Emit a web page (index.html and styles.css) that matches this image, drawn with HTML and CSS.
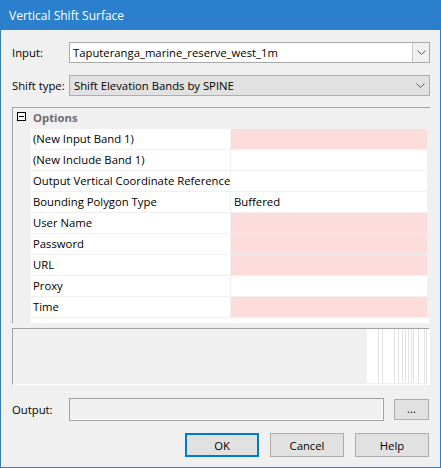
FILE: index.html
```html
<!DOCTYPE html>
<html>
<head>
<meta charset="utf-8">
<link rel="stylesheet" href="styles.css">
</head>
<body>
<div class="window">
  <div class="titlebar">Vertical Shift Surface</div>
  <div class="content">
    <div class="field-row first">
      <div class="label">Input:</div>
      <div class="combo editable">
        <div class="combo-text">Taputeranga_marine_reserve_west_1m</div>
        <div class="combo-btn"><svg width="9" height="5" viewBox="0 0 9 5"><path d="M0.5 0.5 L4.5 4.5 L8.5 0.5" fill="none" stroke="#606060" stroke-width="1"/></svg></div>
      </div>
    </div>
    <div class="field-row second">
      <div class="label">Shift type:</div>
      <div class="combo list">
        <div class="combo-text">Shift Elevation Bands by SPINE</div>
        <div class="combo-arrow"><svg width="9" height="5" viewBox="0 0 9 5"><path d="M0.5 0.5 L4.5 4.5 L8.5 0.5" fill="none" stroke="#606060" stroke-width="1"/></svg></div>
      </div>
    </div>
    <div class="grid">
      <div class="cat-row">
        <div class="gutter"><span class="minus"></span></div>
        <div class="cat-name">Options</div>
      </div>
      <div class="prop-row"><div class="gutter"></div><div class="name">(New Input Band 1)</div><div class="value req"></div></div>
      <div class="prop-row"><div class="gutter"></div><div class="name">(New Include Band 1)</div><div class="value"></div></div>
      <div class="prop-row"><div class="gutter"></div><div class="name">Output Vertical Coordinate Reference</div><div class="value"></div></div>
      <div class="prop-row"><div class="gutter"></div><div class="name">Bounding Polygon Type</div><div class="value">Buffered</div></div>
      <div class="prop-row"><div class="gutter"></div><div class="name">User Name</div><div class="value req"></div></div>
      <div class="prop-row"><div class="gutter"></div><div class="name">Password</div><div class="value req"></div></div>
      <div class="prop-row"><div class="gutter"></div><div class="name">URL</div><div class="value req"></div></div>
      <div class="prop-row"><div class="gutter"></div><div class="name">Proxy</div><div class="value"></div></div>
      <div class="prop-row"><div class="gutter"></div><div class="name">Time</div><div class="value req"></div></div>
      <div class="grid-tail"><div class="gutter"></div><div class="tail-fill"></div></div>
    </div>
    <div class="desc">
      <div class="glitch">
        <div class="g" style="width:11px"></div>
        <div class="g" style="width:4px"></div>
        <div class="g" style="width:12px"></div>
        <div class="g" style="width:4px"></div>
        <div class="g" style="width:4px"></div>
        <div class="g" style="width:3px"></div>
        <div class="g" style="width:3px"></div>
        <div class="g" style="width:3px"></div>
        <div class="g" style="width:2px"></div>
        <div class="g" style="width:5px"></div>
        <div class="g" style="width:6px"></div>
        <div class="g" style="width:2px"></div>
        <div class="g" style="width:2px"></div>
      </div>
    </div>
    <div class="output-row">
      <div class="label">Output:</div>
      <div class="out-box"></div>
      <div class="btn small">...</div>
    </div>
    <div class="buttons">
      <div class="btn default">OK</div>
      <div class="btn">Cancel</div>
      <div class="btn">Help</div>
    </div>
  </div>
</div>
</body>
</html>
```
FILE: styles.css
```css
html, body {
  margin: 0;
  padding: 0;
  background: #f0f0f0;
}
body {
  font-family: "Open Sans", "Noto Sans", sans-serif;
  font-size: 11.3px;
  color: #000;
}
.window {
  width: 441px;
  height: 468px;
  box-sizing: border-box;
  border: 1px solid #2b7fcc;
  border-top: 0;
  background: #f0f0f0;
  display: flex;
  flex-direction: column;
}
.titlebar {
  height: 30px;
  margin: 0 -1px;
  background: #2b7fcc;
  color: #fff;
  font-size: 12px;
  padding-left: 9px;
  display: flex;
  align-items: center;
}
.content {
  padding: 0 10px 0 11px;
  display: flex;
  flex-direction: column;
}
.field-row {
  display: flex;
  align-items: center;
  height: 21px;
}
.field-row.first { margin-top: 12px; }
.field-row.second { margin-top: 12px; }
.label {
  width: 57px;
  flex: none;
}
.combo {
  flex: 1;
  height: 21px;
  box-sizing: border-box;
  display: flex;
  align-items: center;
}
.combo.editable {
  border: 1px solid #a9a9a9;
  background: #fff;
}
.combo.list {
  border: 1px solid #adadad;
  background: #e1e1e1;
}
.combo-text {
  flex: 1;
  padding-left: 3px;
  white-space: nowrap;
  overflow: hidden;
}
.combo.list .combo-text { padding-left: 4px; }
.combo-btn {
  width: 16px;
  height: 19px;
  border-left: 1px solid #c8c8c8;
  background: #f0f0f0;
  display: flex;
  align-items: center;
  justify-content: center;
}
.combo-arrow {
  width: 17px;
  display: flex;
  align-items: center;
  justify-content: center;
}
.grid {
  margin-top: 11px;
  height: 216px;
  box-sizing: border-box;
  border-top: 1px solid #a0a0a0;
  border-left: 1px solid #a0a0a0;
  display: flex;
  flex-direction: column;
}
.cat-row, .prop-row {
  display: flex;
  height: 21px;
  flex: none;
}
.gutter {
  width: 18px;
  flex: none;
  background: #f0f0f0;
  position: relative;
}
.cat-name {
  flex: 1;
  background: #f0f0f0;
  font-weight: bold;
  color: #6d6d6d;
  padding-left: 2px;
  line-height: 20px;
}
.minus {
  position: absolute;
  left: 4px;
  top: 4px;
  width: 9px;
  height: 9px;
  box-sizing: border-box;
  border: 1px solid #000;
  background: #fff;
}
.minus::after {
  content: "";
  position: absolute;
  left: 1px;
  right: 1px;
  top: 3px;
  height: 1px;
  background: #000;
}
.name {
  width: 200px;
  flex: none;
  background: #fff;
  border-bottom: 1px solid #f0f0f0;
  border-right: 1px solid #f0f0f0;
  box-sizing: border-box;
  padding-left: 2px;
  line-height: 20px;
  white-space: nowrap;
  overflow: hidden;
}
.value {
  width: 196px;
  flex: none;
  background: #fff;
  border-bottom: 1px solid #f0f0f0;
  box-sizing: border-box;
  padding-left: 3px;
  line-height: 20px;
  white-space: nowrap;
}
.value.req { background: #fddcdc; }
.grid-tail {
  flex: 1;
  display: flex;
}
.tail-fill {
  width: 398px;
  background: #fff;
}
.desc {
  margin-top: 5px;
  height: 57px;
  box-sizing: border-box;
  border-top: 1px solid #a0a0a0;
  border-left: 1px solid #a0a0a0;
  border-right: 1px solid #fff;
  border-bottom: 1px solid #fff;
  display: flex;
  justify-content: flex-end;
}
.glitch {
  width: 62px;
  height: 54px;
  background: #fff;
  display: flex;
}
.g {
  flex: none;
  height: 54px;
  border-left: 1px solid #e2e2e2;
  box-sizing: border-box;
}
.g:first-child { border-left: 0; }
.output-row {
  margin-top: 13px;
  display: flex;
  align-items: center;
  height: 23px;
}
.out-box {
  width: 315px;
  height: 23px;
  box-sizing: border-box;
  border: 1px solid #a0a0a0;
  box-shadow: inset -1px -1px 0 #fff;
  background: #f0f0f0;
}
.btn {
  box-sizing: border-box;
  border: 1px solid #adadad;
  background: #e1e1e1;
  display: flex;
  align-items: center;
  justify-content: center;
}
.btn.small {
  margin-left: 10px;
  width: 35px;
  height: 21px;
  padding-bottom: 2px;
}
.buttons {
  margin-top: 12px;
  display: flex;
  justify-content: flex-end;
  gap: 11px;
  padding-right: 1px;
}
.buttons .btn {
  width: 74px;
  height: 24px;
}
.btn.default {
  border: 2px solid #0078d7;
}
```
